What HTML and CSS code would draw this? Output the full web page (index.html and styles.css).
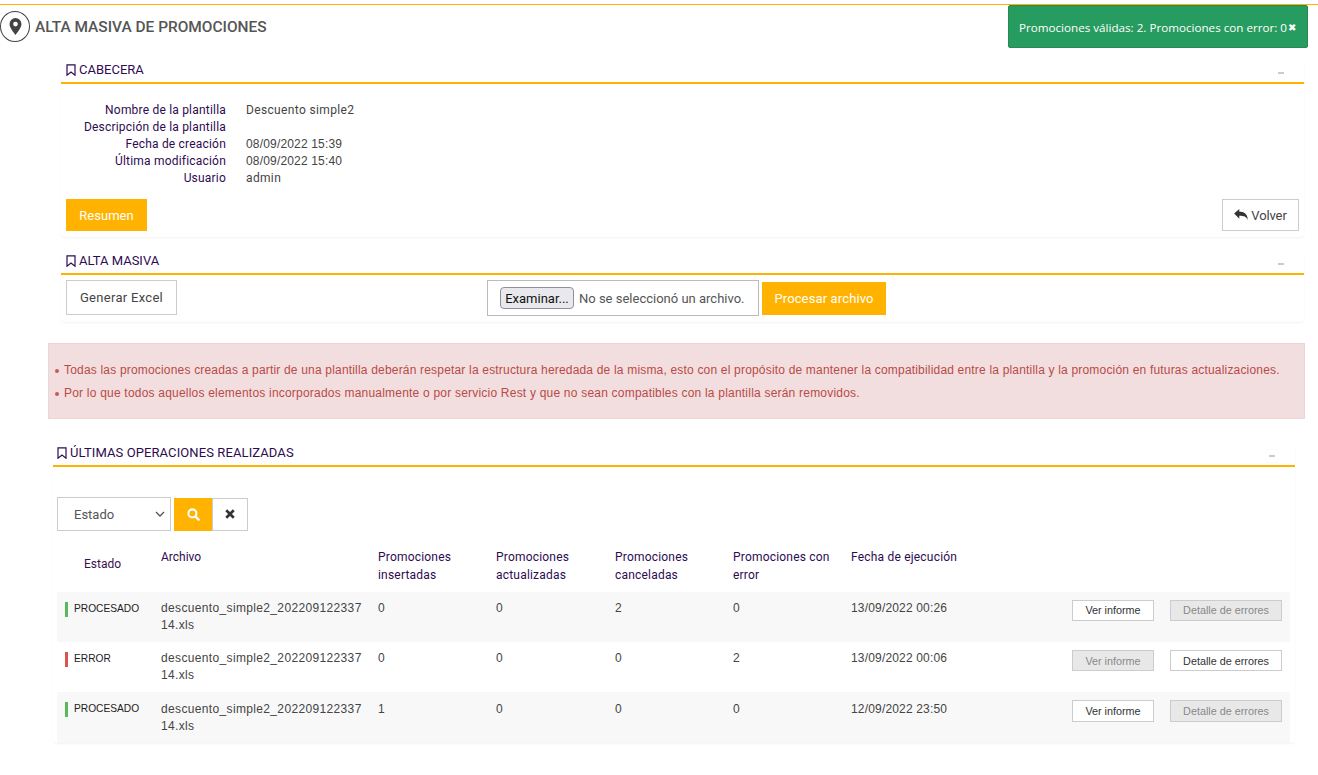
FILE: index.html
```html
<!DOCTYPE html>
<html lang="es">
<head>
<meta charset="utf-8">
<title>Alta masiva de promociones</title>
<link rel="stylesheet" href="styles.css">
</head>
<body>
<header class="page-head">
  <span class="pin-circle">
    <svg viewBox="0 0 12 16" width="13" height="17"><path fill="#444" fill-rule="evenodd" d="M6 0a5.6 5.6 0 0 0-5.6 5.6C.4 9 4.4 13.600 6 16c1.600-2.400 5.600-7 5.600-10.400A5.600 5.600 0 0 0 6 0zm0 3.500a2.200 2.200 0 1 1 0 4.400 2.200 2.200 0 0 1 0-4.400z"/></svg>
  </span>
  <h1>ALTA MASIVA DE PROMOCIONES</h1>
</header>

<div class="toast">Promociones válidas: 2. Promociones con error: 0<span class="toast-x">✖</span></div>

<section class="card card-a">
  <div class="sec-head">
    <svg class="bm" viewBox="0 0 10 12" width="10" height="12"><path fill="none" stroke="#2e0b52" stroke-width="1.200" d="M1 .8h8v10.400L5 8l-4 3.200z"/></svg>
    <h2>CABECERA</h2><span class="dash"></span>
  </div>
  <dl class="info">
    <dt>Nombre de la plantilla</dt><dd>Descuento simple2</dd>
    <dt>Descripción de la plantilla</dt><dd></dd>
    <dt>Fecha de creación</dt><dd class="when">08/09/2022 15:39</dd>
    <dt>Última modificación</dt><dd class="when">08/09/2022 15:40</dd>
    <dt>Usuario</dt><dd>admin</dd>
  </dl>
  <div class="actions">
    <button class="btn primary resumen">Resumen</button>
    <button class="btn ghost volver"><svg viewBox="0 0 16 14" width="14" height="12"><path fill="#333" d="M0 5.300 6 0v3.200c5 0 9.500 1.600 10 9.800-1.700-4-4.500-5-10-5v3.300z"/></svg>Volver</button>
  </div>
</section>

<section class="card card-b">
  <div class="sec-head">
    <svg class="bm" viewBox="0 0 10 12" width="10" height="12"><path fill="none" stroke="#2e0b52" stroke-width="1.200" d="M1 .8h8v10.400L5 8l-4 3.200z"/></svg>
    <h2>ALTA MASIVA</h2><span class="dash"></span>
  </div>
  <div class="upload">
    <button class="btn ghost excel">Generar Excel</button>
    <div class="file-group">
      <div class="file-box"><button class="file-btn">Examinar...</button><span>No se seleccionó un archivo.</span></div>
      <button class="btn primary procesar">Procesar archivo</button>
    </div>
  </div>
</section>

<div class="alert">
  <ul>
    <li>Todas las promociones creadas a partir de una plantilla deberán respetar la estructura heredada de la misma, esto con el propósito de mantener la compatibilidad entre la plantilla y la promoción en futuras actualizaciones.</li>
    <li class="second">Por lo que todos aquellos elementos incorporados manualmente o por servicio Rest y que no sean compatibles con la plantilla serán removidos.</li>
  </ul>
</div>

<section class="card card-c">
  <div class="sec-head">
    <svg class="bm" viewBox="0 0 10 12" width="10" height="12"><path fill="none" stroke="#2e0b52" stroke-width="1.200" d="M1 .8h8v10.400L5 8l-4 3.200z"/></svg>
    <h2>ÚLTIMAS OPERACIONES REALIZADAS</h2><span class="dash"></span>
  </div>
  <div class="filters">
    <div class="select">Estado<svg viewBox="0 0 10 6" width="10" height="6"><path fill="none" stroke="#555" stroke-width="1.300" d="M1 1l4 4 4-4"/></svg></div>
    <button class="icon-btn search"><svg viewBox="0 0 14 14" width="13" height="13"><circle cx="5.800" cy="5.800" r="4.300" fill="none" stroke="#fff" stroke-width="2.200"/><path stroke="#fff" stroke-width="2.600" stroke-linecap="round" d="M9.200 9.200l3.300 3.300"/></svg></button>
    <button class="icon-btn clear"><svg viewBox="0 0 12 12" width="10" height="10"><path stroke="#333" stroke-width="3.200" d="M1.500 1.500l9 9m0-9l-9 9"/></svg></button>
  </div>
  <table>
    <thead>
      <tr>
        <th class="c-state"><span class="state-h">Estado</span></th>
        <th class="c-file">Archivo</th>
        <th class="c-n">Promociones insertadas</th>
        <th class="c-n c-wide">Promociones actualizadas</th>
        <th class="c-n">Promociones canceladas</th>
        <th class="c-n">Promociones con error</th>
        <th class="c-date">Fecha de ejecución</th>
        <th class="c-act"></th>
      </tr>
    </thead>
    <tbody>
      <tr>
        <td><span class="status ok">PROCESADO</span></td>
        <td class="file">descuento_simple2_20220912233714.xls</td>
        <td>0</td><td>0</td><td>2</td><td>0</td>
        <td class="when">13/09/2022 00:26</td>
        <td class="row-act"><button class="mini ver">Ver informe</button><button class="mini det off">Detalle de errores</button></td>
      </tr>
      <tr class="mid">
        <td><span class="status bad">ERROR</span></td>
        <td class="file">descuento_simple2_20220912233714.xls</td>
        <td>0</td><td>0</td><td>0</td><td>2</td>
        <td class="when">13/09/2022 00:06</td>
        <td class="row-act"><button class="mini ver off">Ver informe</button><button class="mini det">Detalle de errores</button></td>
      </tr>
      <tr class="last">
        <td><span class="status ok">PROCESADO</span></td>
        <td class="file">descuento_simple2_20220912233714.xls</td>
        <td>1</td><td>0</td><td>0</td><td>0</td>
        <td class="when">12/09/2022 23:50</td>
        <td class="row-act"><button class="mini ver">Ver informe</button><button class="mini det off">Detalle de errores</button></td>
      </tr>
    </tbody>
  </table>
</section>
</body>
</html>
```

FILE: styles.css
```css
* { box-sizing: border-box; }
html, body { margin: 0; padding: 0; }
body {
  height: 775px;
  overflow: hidden;
  background: #fff;
  color: #444;
  font: 12px/17px Roboto, "Liberation Sans", sans-serif;
  padding-top: 4px;
}
button { font-family: inherit; cursor: pointer; }

.page-head {
  border-top: 1px solid #ffb300;
  height: 43px;
  display: flex;
  align-items: center;
  gap: 5px;
  padding-top: 1px;
}
.pin-circle {
  width: 30px; height: 31px;
  border: 1px solid #444;
  border-radius: 50%;
  display: flex; align-items: center; justify-content: center;
}
h1 { margin: 0; font-size: 15.45px; font-weight: 500; color: #555; line-height: 20px; }

.toast {
  position: absolute;
  left: 1008px; top: 5px;
  width: 300px; height: 43px;
  background: #279c60;
  border: 1px solid #2a8a4e;
  border-radius: 2px;
  color: #fff;
  display: flex;
  align-items: center;
  padding: 1px 0 0 10px;
  font: 11.65px/17px "Open Sans", "Liberation Sans", sans-serif;
  white-space: nowrap;
}
.toast-x { font-size: 10px; margin-left: 1px; }

.card {
  border-radius: 4px;
  box-shadow: 0 1px 2px rgba(0, 0, 0, .05);
}
.card-a { margin: 12px 14px 0 61px; height: 178px; }
.card-b { margin: 13px 14px 0 61px; height: 72px; }
.card-c { margin: 23px 23px 0 53px; }

.sec-head {
  height: 25px;
  border-bottom: 2px solid #ffb300;
  display: flex;
  align-items: center;
  padding: 0 20px 2px 5px;
  gap: 3px;
}
.card-c .sec-head { padding-left: 4px; }
.sec-head h2 {
  margin: 0;
  font-size: 13px;
  font-weight: 400;
  color: #2e0b52;
  line-height: 17px;
  flex: 1;
}
.card-c .sec-head h2 { letter-spacing: .1px; }
.dash { width: 6px; height: 2px; background: #ccc; margin-top: 6px; }
.bm { flex: none; }

.info {
  margin: 0;
  padding-top: 18px;
  display: grid;
  grid-template-columns: 165px 1fr;
  column-gap: 20px;
  grid-auto-rows: 17px;
}
.info dt { text-align: right; color: #2e0b52; letter-spacing: .2px; }
.info dd { margin: 0; color: #444; letter-spacing: .35px; }
.info dd.when, .when { font-family: "Liberation Sans", sans-serif; letter-spacing: .17px; }

.actions {
  display: flex;
  justify-content: space-between;
  padding: 12px 5px 0;
}
.btn {
  height: 32px;
  font-size: 13px;
  border-radius: 0;
  padding: 0;
}
.primary { background: #ffb300; border: 0; color: #fff; }
.ghost { background: #fff; border: 1px solid #ccc; color: #444; }
.resumen { width: 81px; }
.volver { width: 77px; display: flex; align-items: center; justify-content: center; gap: 3px; letter-spacing: -.1px; }

.upload {
  display: flex;
  align-items: flex-start;
  padding: 5px 5px 0;
}
.excel { width: 111px; height: 35px; letter-spacing: .3px; }
.file-group {
  display: flex;
  align-items: center;
  gap: 3px;
  margin-left: 310px;
}
.file-box {
  width: 272px; height: 36px;
  border: 1px solid #bbb;
  display: flex; align-items: center;
  padding-left: 12px;
  gap: 5px;
  color: #555;
  font-size: 13px;
  white-space: nowrap;
}
.file-btn {
  width: 74px; height: 22px;
  padding: 0;
  background: #e9e9ed;
  border: 1px solid #8f8f9d;
  border-radius: 4px;
  color: #111;
  font-size: 13px;
}
.procesar { width: 124px; height: 33px; letter-spacing: .13px; }

.alert {
  margin: 21px 13px 0 48px;
  height: 76px;
  background: #f2dede;
  border: 1px solid #ebd5d5;
  color: #b94a48;
  font: 12px/23px "Liberation Sans", sans-serif;
  letter-spacing: .185px;
  white-space: nowrap;
  display: flex;
  align-items: center;
}
.alert ul { margin: 0; padding: 1px 0 0 15px; list-style: none; }
.alert li { position: relative; }
.alert li.second { letter-spacing: .21px; }
.alert li::before {
  content: "";
  position: absolute;
  left: -9px; top: 10px;
  width: 4px; height: 4px;
  border-radius: 50%;
  background: #c65a58;
}

.filters {
  display: flex;
  align-items: center;
  padding: 30px 0 0 4px;
}
.select {
  width: 114px; height: 34px;
  border: 1px solid #ccc;
  font-size: 13px;
  color: #555;
  display: flex; align-items: center; justify-content: space-between;
  padding: 0 5px 0 16px;
  margin-right: 3px;
}
.icon-btn {
  height: 33px;
  padding: 0;
  display: flex; align-items: center; justify-content: center;
  border-radius: 0;
}
.search { width: 38px; background: #ffb300; border: 0; }
.clear { width: 36px; background: #fff; border: 1px solid #ccc; }

table {
  border-collapse: collapse;
  table-layout: fixed;
  width: 1233px;
  margin: 8px 0 0 4px;
  font: 12px/17px "Liberation Sans", sans-serif;
  color: #444;
}
.c-state { width: 104px; }
.c-file { width: 217px; }
.c-n { width: 118px; }
.c-wide { width: 119px; }
.c-date { width: 150px; }
thead th {
  height: 53px;
  vertical-align: top;
  text-align: left;
  font: 400 12px/18px Roboto, "Liberation Sans", sans-serif;
  color: #2e0b52;
  padding: 9px 16px 0 0;
}
th.c-n, th.c-date { letter-spacing: .2px; }
th.c-state { padding: 0; }
.state-h { display: block; padding: 16px 0 0 27px; color: #3a0f4f; }
tbody td {
  height: 50px;
  vertical-align: top;
  padding: 8px 16px 0 0;
}
tbody tr.last td { height: 51px; padding-top: 9px; }
tbody td.file { word-break: break-all; letter-spacing: .35px; padding-right: 15px; }
tbody tr:nth-child(odd) { background: #f8f8f8; }
.status {
  display: block;
  margin: 2px 0 0 8px;
  height: 15px;
  padding-left: 6px;
  border-left: 3px solid;
  font-size: 10.200px;
  line-height: 13px;
  color: #222;
  white-space: nowrap;
}
.last .status { margin-top: 1px; }
.ok { border-left-color: #5cb85c; }
.bad { border-left-color: #d9534f; }
tbody td.row-act, tbody tr.last td.row-act {
  padding: 8px 8px 0 0;
  text-align: right;
}
.mini {
  height: 21px;
  background: #fff;
  border: 1px solid #ccc;
  color: #333;
  font: 10.800px/17px "Liberation Sans", sans-serif;
  padding: 0;
  margin-left: 16px;
  vertical-align: top;
}
.mid .mini { padding-top: 1px; }
.last .mini { height: 22px; padding-top: 1px; }
.ver { width: 82px; }
.det { width: 112px; }
.off { background: #e8e8e8; color: #888; }
```
